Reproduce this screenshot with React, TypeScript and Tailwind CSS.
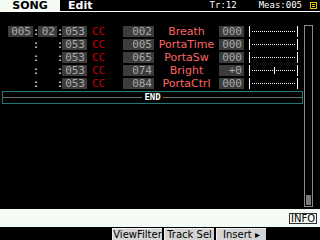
import React from 'react';

interface Row {
  meas: string;
  beat: string;
  tick: string;
  num: string;
  name: string;
  value: string;
  marker?: boolean;
}

const rows: Row[] = [
  { meas: '005', beat: '02', tick: '053', num: '002', name: 'Breath', value: '000' },
  { meas: '', beat: '', tick: '053', num: '005', name: 'PortaTime', value: '000' },
  { meas: '', beat: '', tick: '053', num: '065', name: 'PortaSw', value: '000' },
  { meas: '', beat: '', tick: '053', num: '074', name: 'Bright', value: '+0', marker: true },
  { meas: '', beat: '', tick: '053', num: '084', name: 'PortaCtrl', value: '000' },
];

const mono = "font-['DejaVu_Sans_Mono',monospace]";

function Box({ w, text }: { w: string; text: string }) {
  return (
    <div className={`${w} shrink-0 h-[11px] bg-[#3c3c3c] text-[#a8a8a8] text-[11px] leading-[11px] text-right pr-[2px] ${mono}`}>
      {text}
    </div>
  );
}

function EventRow({ row }: { row: Row }) {
  return (
    <div className="flex h-[11px] items-center">
      <div className="ml-[8px]">
        {row.meas ? <Box w="w-[25px]" text={row.meas} /> : <div className="w-[25px]" />}
      </div>
      <span className={`w-[5px] text-center text-white text-[10px] leading-[11px] ${mono}`}>:</span>
      {row.beat ? <Box w="w-[19px]" text={row.beat} /> : <div className="w-[19px]" />}
      <span className={`w-[5px] text-center text-white text-[10px] leading-[11px] ${mono}`}>:</span>
      <Box w="w-[25px]" text={row.tick} />
      <span className={`ml-[5px] w-[31px] shrink-0 text-[#c00000] text-[11px] leading-[11px] ${mono}`}>CC</span>
      <Box w="w-[31px]" text={row.num} />
      <span className="w-[65px] shrink-0 text-center text-[#ff6464] text-[11px] leading-[11px] whitespace-nowrap font-['DejaVu_Sans',sans-serif]">
        {row.name}
      </span>
      <Box w="w-[25px]" text={row.value} />
      <div className="ml-[5px] w-[49px] shrink-0 h-[11px] flex items-center border-l border-r border-white relative">
        <div className="w-full mx-[2px] border-t border-dotted border-white" />
        {row.marker && <div className="absolute left-[24px] top-[2px] w-px h-[7px] bg-white" />}
      </div>
    </div>
  );
}

export default function App() {
  return (
    <div className="w-[320px] h-[240px] bg-black flex flex-col overflow-hidden">
      {/* header */}
      <div className="h-[11px] flex items-start">
        <div className="w-[60px] h-[11px] bg-[#f4faf4] text-black text-[11px] leading-[11px] font-bold text-center font-['DejaVu_Sans',sans-serif]">
          SONG
        </div>
        <span className="ml-[8px] text-white text-[11px] leading-[11px] font-bold font-['DejaVu_Sans',sans-serif]">Edit</span>
        <span className={`ml-auto text-white text-[9px] leading-[11px] ${mono}`}>Tr:12</span>
        <span className={`ml-[22px] text-white text-[9px] leading-[11px] ${mono}`}>Meas:005</span>
        <svg className="ml-[8px] mr-[3px] mt-[2px]" width="7" height="7" viewBox="0 0 7 7">
          <rect x="0.5" y="0.5" width="6" height="6" fill="none" stroke="#e8c800" />
          <line x1="2" y1="2.5" x2="5" y2="2.5" stroke="#e8c800" />
          <line x1="2" y1="4.5" x2="5" y2="4.5" stroke="#e8c800" />
        </svg>
      </div>
      <div className="h-px bg-white" />

      {/* list */}
      <div className="h-[197px] flex">
        <div className="w-[303px] pt-[14px] flex flex-col gap-[2px]">
          {rows.map((r, i) => (
            <EventRow key={i} row={r} />
          ))}
          <div className="ml-[2px] w-[301px] h-[13px] border border-[#1e7878] flex items-center">
            <div className="flex-1 h-px bg-[#6a6a6a]" />
            <span className={`px-[2px] text-white text-[9px] leading-[9px] font-bold ${mono}`}>END</span>
            <div className="flex-1 h-px bg-[#6a6a6a]" />
          </div>
        </div>
        <div className="ml-[1px] mt-[13px] w-[9px] h-[182px] border border-[#8a8a8a] flex flex-col justify-end p-[1px]">
          <div className="h-[10px] bg-[#7a7a7a]" />
        </div>
      </div>

      {/* info bar */}
      <div className="h-[18px] bg-[#f4faf4] flex items-center justify-end pr-[3px]">
        <div className="w-[28px] h-[11px] border border-[#303030] bg-[#f4faf4] text-black text-[10px] leading-[9px] text-center font-['DejaVu_Sans',sans-serif]">
          INFO
        </div>
      </div>

      {/* function tabs */}
      <div className="h-[13px] flex items-end pl-[112px] gap-[2px]">
        {['ViewFilter', 'Track Sel', 'Insert \u25B8'].map((t) => (
          <div
            key={t}
            className="w-[50px] h-[12px] bg-[#d4d4d4] border-t border-l border-[#f0f0f0] text-black text-[10px] leading-[12px] text-center whitespace-nowrap font-['DejaVu_Sans',sans-serif]"
          >
            {t}
          </div>
        ))}
      </div>
    </div>
  );
}
